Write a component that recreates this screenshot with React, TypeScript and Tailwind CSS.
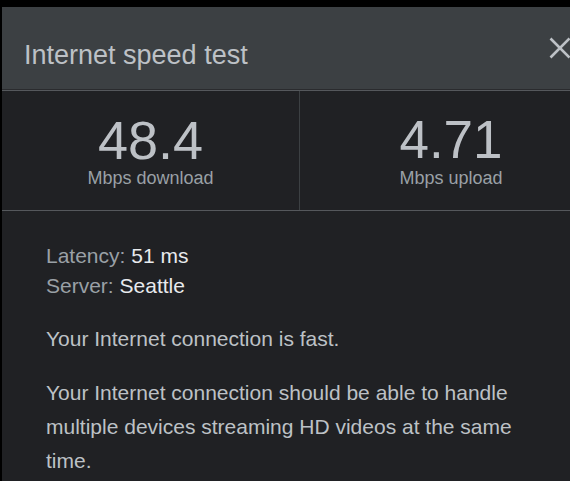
import React from "react";

export default function App() {
  return (
    <div
      className="w-[570px] h-[481px] overflow-hidden bg-black pt-[7px] pl-[2px]"
      style={{ fontFamily: '"Liberation Sans", Arial, sans-serif' }}
    >
      <div className="w-[600px] h-[600px] bg-[#202124]">
        <div className="h-[83px] bg-[#3c4043] flex items-start justify-between pt-[32px] pl-[22px] pr-[31px] border-b border-[#2a2b2e]">
          <div className="text-[27px] leading-[32px] text-[#bdc1c6]">Internet speed test</div>
          <svg width="22" height="22" viewBox="0 0 22 22" className="-mt-[2px]">
            <path d="M1.5 1.5 L20.5 20.5 M20.5 1.5 L1.5 20.5" stroke="#bdc1c6" strokeWidth="2.6" strokeLinecap="butt" />
          </svg>
        </div>
        <div className="grid grid-cols-[298px_1fr] border-t border-[#55585c] border-b">
          <div className="flex flex-col items-center pt-[23px] pb-[21px] border-r border-[#3c4043]">
            <div className="text-[54px] leading-[52px] text-[#bdc1c6]">48.4</div>
            <div className="mt-[1px] text-[18px] leading-[22px] text-[#9aa0a6]">Mbps download</div>
          </div>
          <div className="flex flex-col items-center pt-[23px] pb-[21px]">
            <div className="text-[53px] leading-[52px] text-[#bdc1c6]">4.71</div>
            <div className="mt-[1px] text-[18px] leading-[22px] text-[#9aa0a6]">Mbps upload</div>
          </div>
        </div>
        <div className="pl-[44px] pr-[40px] pt-[30px] text-[21px]">
          <div className="leading-[30px] text-[#9aa0a6]">
            Latency: <span className="text-[#e8eaed]">51 ms</span>
          </div>
          <div className="leading-[30px] text-[#9aa0a6]">
            Server: <span className="text-[#e8eaed]">Seattle</span>
          </div>
          <p className="mt-[21px] leading-[34px] text-[#bdc1c6]">Your Internet connection is fast.</p>
          <p className="mt-[20px] leading-[34px] text-[#bdc1c6] w-[480px]">
            Your Internet connection should be able to handle multiple devices streaming HD videos at the same time.
          </p>
        </div>
      </div>
    </div>
  );
}
